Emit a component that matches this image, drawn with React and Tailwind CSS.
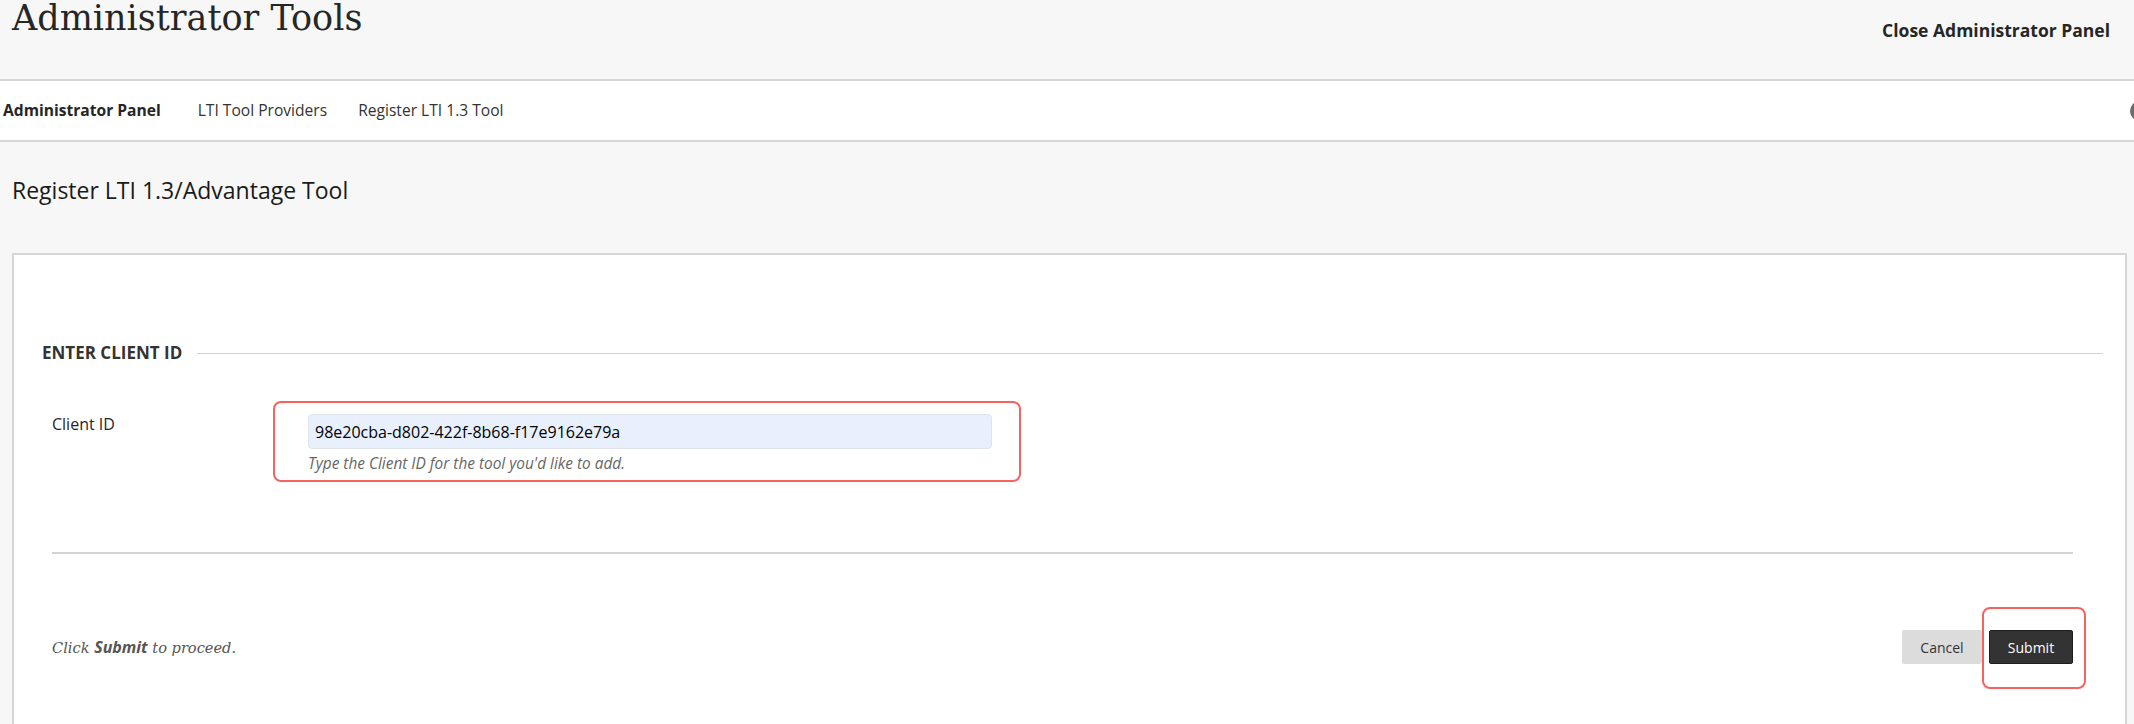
export default function App() {
  const sans = { fontFamily: '"Open Sans", "Noto Sans", sans-serif' };
  return (
    <div className="w-full h-[724px] overflow-hidden bg-[#f7f7f7] text-[#262626]" style={sans}>
      {/* Header */}
      <div className="h-[81px] flex justify-between border-b-2 border-[#d6d6d6] bg-[#f7f7f7]">
        <div
          className="ml-[12px] pt-[1px] text-[35px] leading-none text-[#262626] whitespace-nowrap"
          style={{ fontFamily: '"DejaVu Serif", "Liberation Serif", serif' }}
        >
          Administrator Tools
        </div>
        <div className="mr-[24px] mt-[19px] h-[22px] flex items-center text-[17.5px] font-bold text-[#262626] whitespace-nowrap">
          Close Administrator Panel
        </div>
      </div>

      {/* Nav */}
      <div className="h-[61px] bg-white border-b-2 border-[#d6d6d6] flex items-center text-[15.6px] whitespace-nowrap">
        <span className="ml-[3px] font-bold text-[#262626]">Administrator Panel</span>
        <span className="ml-[37px] text-[#333]">LTI Tool Providers</span>
        <span className="ml-[31px] text-[#333]">Register LTI 1.3 Tool</span>
        <span className="ml-auto mr-[-16px] w-[20px] h-[20px] rounded-full bg-[#6b6b6b]"></span>
      </div>

      {/* Page title */}
      <div className="h-[111px] pl-[12px] pt-[33px]">
        <h1 className="text-[23px] leading-[30px] text-[#1a1a1a] font-normal">Register LTI 1.3/Advantage Tool</h1>
      </div>

      {/* Panel */}
      <div className="ml-[12px] mr-[7px] bg-white border-2 border-b-0 border-[#d6d6d6] h-[480px]">
        {/* Section heading */}
        <div className="pt-[88px] pl-[28px] pr-[22px] flex items-center h-[108px]">
          <span className="text-[17px] font-bold text-[#333] leading-[20px] whitespace-nowrap">ENTER CLIENT ID</span>
          <div className="flex-1 h-px bg-[#cfcfcf] ml-[15px]"></div>
        </div>

        {/* Field row */}
        <div className="mt-[38px] pl-[38px] flex items-start">
          <label className="w-[221px] pt-[13px] text-[16px] leading-[20px] text-[#262626]">Client ID</label>
          <div className="w-[748px] h-[81px] border-2 border-[#f6635e] rounded-[8px] pl-[33px] pt-[11px]">
            <div className="w-[684px] h-[35px] bg-[#e8f0fe] border border-[#dfe4ec] rounded-[4px] flex items-center pl-[6px] text-[16px] text-black">
              98e20cba-d802-422f-8b68-f17e9162e79a
            </div>
            <div className="mt-[5px] text-[15.4px] leading-[20px] italic text-[#666]">
              Type the Client ID for the tool you'd like to add.
            </div>
          </div>
        </div>

        {/* Separator */}
        <div className="mt-[70px] ml-[38px] mr-[52px] h-[2px] bg-[#d4d4d4]"></div>

        {/* Footer */}
        <div className="mt-[76px] ml-[38px] mr-[52px] h-[34px] flex items-center justify-between">
          <div
            className="text-[14.6px] italic text-[#555]"
            style={{ fontFamily: '"DejaVu Serif", "Liberation Serif", serif' }}
          >
            Click <b className="font-bold text-[16px]" style={sans}><i>Submit</i></b> to proceed.
          </div>
          <div className="flex items-center gap-[7px]">
            <button className="w-[80px] h-[34px] bg-[#dcdcdc] rounded-[2px] text-[14px] text-[#333]">Cancel</button>
            <div className="relative">
              <button className="w-[84px] h-[34px] bg-[#333] border border-[#1f1f1f] rounded-[2px] text-[14px] text-white">Submit</button>
              <div className="absolute left-[-7px] top-[-23px] w-[104px] h-[82px] border-2 border-[#f6635e] rounded-[8px] pointer-events-none"></div>
            </div>
          </div>
        </div>
      </div>
    </div>
  );
}
